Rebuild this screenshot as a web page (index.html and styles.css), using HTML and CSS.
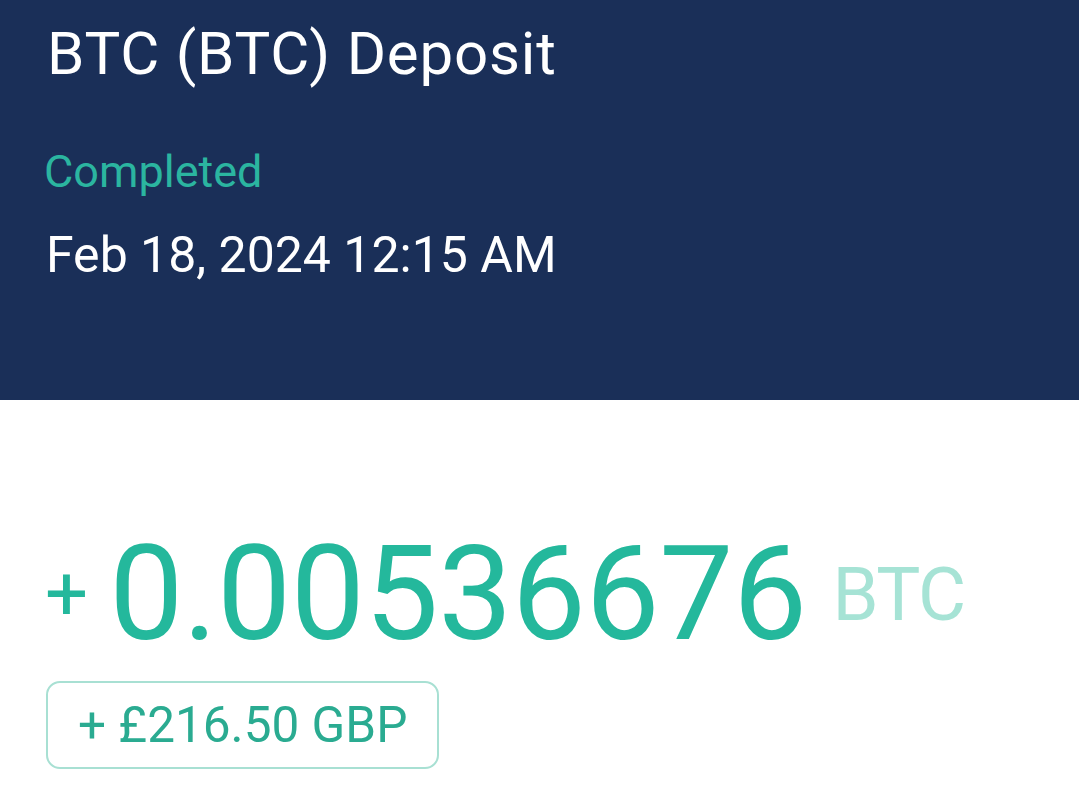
FILE: index.html
```html
<!DOCTYPE html>
<html lang="en">
<head>
    <meta charset="UTF-8">
    <meta name="viewport" content="width=device-width, initial-scale=1.0">
    <title>BTC Deposit</title>
    <link rel="stylesheet" href="styles.css">
</head>
<body>

    <div class="header">
        <h1 class="title">BTC (BTC) Deposit</h1>
        <p class="status">Completed</p>
        <p class="date">Feb 18, 2024 12:15 AM</p>
    </div>

    <div class="amount">
        <div class="amount-row">
            <span class="sign">+</span>
            <span class="value">0.00536676</span>
            <span class="unit">BTC</span>
        </div>
        <div class="fiat">+ £216.50 GBP</div>
    </div>

</body>
</html>
```

FILE: styles.css
```css
body {
    font-family: Roboto, "Noto Sans", sans-serif;
    margin: 0;
    background-color: #ffffff;
}
.header {
    background-color: #1a2f58; /* bleu nuit */
    color: #ffffff;
    padding: 18px 44px 116px;
}
.title {
    font-size: 60px;
    font-weight: 400;
    letter-spacing: 0.8px;
    margin: 0 0 0 3px;
    line-height: normal;
}
.status {
    font-size: 45px;
    color: #2bb5a0;
    margin: 56px 0 0;
}
.date {
    font-size: 50px;
    margin: 28px 0 0 2px;
}
.amount {
    padding: 117px 44px 0;
}
.amount-row {
    display: flex;
    align-items: center;
}
.sign {
    font-size: 76px;
    color: #24b89c;
    margin-left: 1px;
}
.value {
    font-size: 132px;
    letter-spacing: -0.5px;
    color: #24b89c;
    margin-left: 21px;
}
.unit {
    font-size: 74px;
    letter-spacing: -1.5px;
    color: #a6e3d5;
    margin-left: 26px;
}
.fiat {
    display: inline-block;
    margin: 10px 0 0 2px;
    padding: 13px 30px;
    border: 2px solid #a8e0d3;
    border-radius: 14px;
    font-size: 49.5px;
    color: #2aab91;
}
```
